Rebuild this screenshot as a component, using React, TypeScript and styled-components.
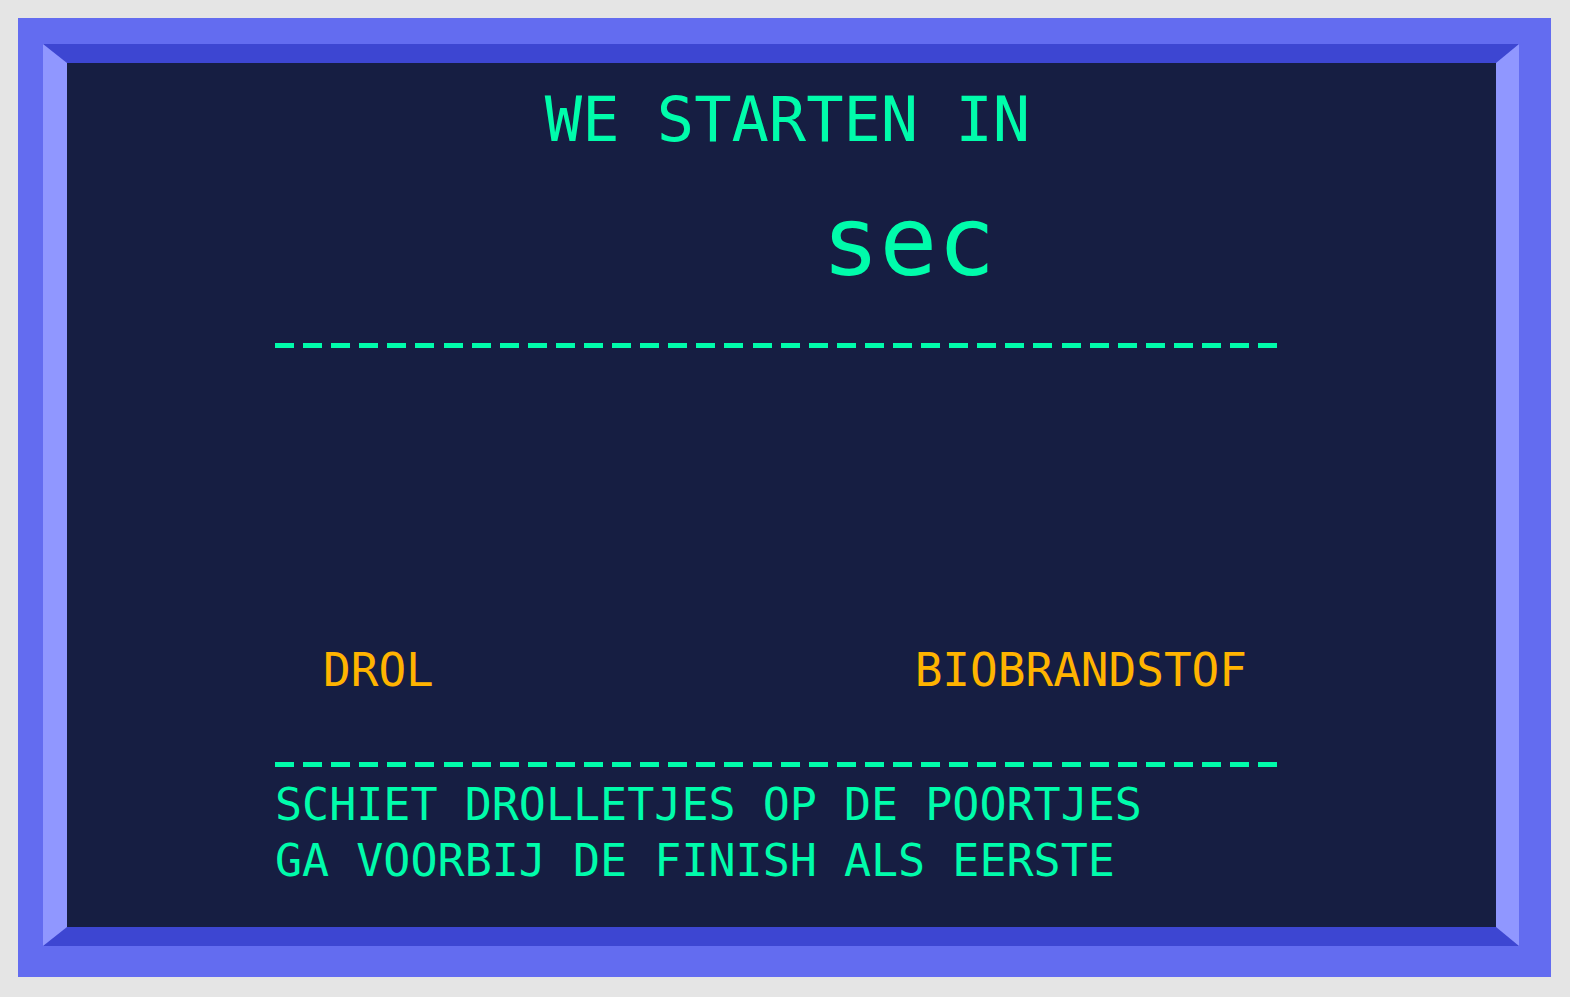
import styled, { createGlobalStyle } from "styled-components";

const GlobalStyle = createGlobalStyle`
    html, body {
        margin: 0;
        padding: 0;
        background: #e5e5e5;
    }
    #root {
        width: 1570px;
        height: 997px;
        overflow: hidden;
    }
`;

const green = "#00fcab";
const orange = "#ffb400";

export default function App() {
    return (
        <>
            <GlobalStyle/>
            <Frame>
                <Bevel>
                    <Screen>
                        <Title>WE STARTEN IN</Title>
                        <Countdown>
                            <Seconds></Seconds>
                            <Unit>sec</Unit>
                        </Countdown>
                        <Column>
                            <DashLine $gapBefore={53}/>
                            <Players>
                                <PlayerName>DROL</PlayerName>
                                <PlayerName>BIOBRANDSTOF</PlayerName>
                            </Players>
                            <DashLine $gapBefore={69}/>
                            <Instructions>
                                <Line>SCHIET DROLLETJES OP DE POORTJES</Line>
                                <Line>GA VOORBIJ DE FINISH ALS EERSTE</Line>
                            </Instructions>
                        </Column>
                    </Screen>
                </Bevel>
            </Frame>
        </>
    );
}

const Frame = styled.div`
    box-sizing: border-box;
    width: 1533px;
    height: 959px;
    margin: 18px 0 0 18px;
    padding: 26px 32px 31px 25px;
    background: #636cf0;
`

const Bevel = styled.div`
    box-sizing: border-box;
    height: 100%;
    border-style: solid;
    border-width: 19px 23px 19px 24px;
    border-color: #3d46d2 #9097ff #3d46d2 #9097ff;
`

const Screen = styled.div`
    box-sizing: border-box;
    height: 100%;
    background: #161e42;
    display: flex;
    flex-direction: column;
    align-items: center;
    padding-top: 26px;
    font-family: "DejaVu Sans Mono", "Liberation Mono", monospace;
    color: ${green};
`

const Title = styled.h1`
    margin: 0 0 0 12px;
    font-size: 62px;
    line-height: 62px;
    font-weight: normal;
    white-space: pre;
`

const Countdown = styled.div`
    display: flex;
    margin-top: 43px;
    font-size: 96px;
    line-height: 96px;
`

const Seconds = styled.span`
    min-width: 254px;
`

const Unit = styled.span`
`

const Column = styled.div`
    align-self: flex-start;
    width: 1002px;
    margin-left: 208px;
    display: flex;
    flex-direction: column;
    font-size: 46px;
    line-height: 46px;
`

const DashLine = styled.div<{ $gapBefore: number }>`
    margin-top: ${p => p.$gapBefore}px;
    height: 5px;
    background: repeating-linear-gradient(90deg, ${green} 0 19px, transparent 19px 28.09px);
`

const Players = styled.div`
    display: flex;
    justify-content: space-between;
    margin-top: 299px;
    padding: 0 30px 0 48px;
    color: ${orange};
`

const PlayerName = styled.span`
    white-space: pre;
`

const Instructions = styled.div`
    margin-top: 10px;
    display: flex;
    flex-direction: column;
    font-size: 45px;
`

const Line = styled.div`
    line-height: 56px;
    height: 56px;
    white-space: pre;
`
